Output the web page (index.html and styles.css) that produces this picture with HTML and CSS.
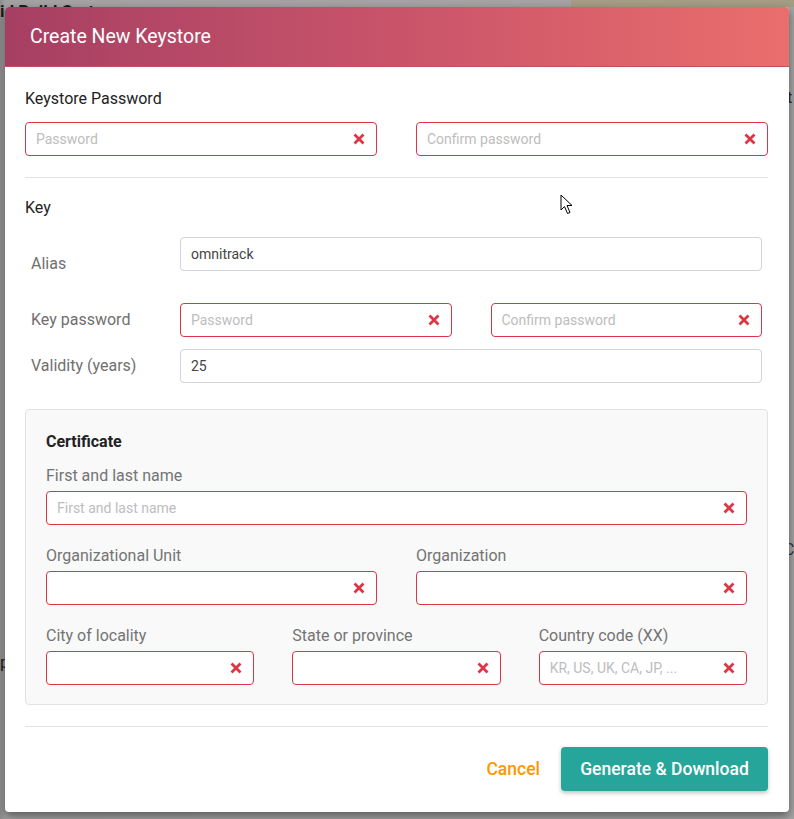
FILE: index.html
```html
<!DOCTYPE html>
<html>
<head>
<meta charset="utf-8">
<link rel="stylesheet" href="styles.css">
</head>
<body>
<div class="backdrop">
  <span class="bg-title">id Build Cert</span>
  <span class="bg-olive"></span>
  <span class="bg-frag bg-t">t</span>
  <span class="bg-frag bg-c">C</span>
  <span class="bg-frag bg-p">p</span>
</div>
<div class="dialog">
  <div class="dialog-header">Create New Keystore</div>
  <div class="dialog-body">
    <div class="section-title">Keystore Password</div>
    <div class="grid-2 top-row">
      <div class="field invalid"><span class="ph">Password</span><svg class="xicon" viewBox="0 0 12 12"><path d="M1.5 1.5L10.5 10.5M10.5 1.5L1.5 10.5"/></svg></div>
      <div class="field invalid"><span class="ph">Confirm password</span><svg class="xicon" viewBox="0 0 12 12"><path d="M1.5 1.5L10.5 10.5M10.5 1.5L1.5 10.5"/></svg></div>
    </div>
    <div class="divider d1"></div>
    <div class="section-title key-title">Key</div>
    <div class="key-rows">
      <div class="key-row alias-row">
        <div class="key-label alias-label">Alias</div>
        <div class="field"><span class="val">omnitrack</span></div>
      </div>
      <div class="key-row pw-row">
        <div class="key-label">Key password</div>
        <div class="grid-2 kp">
          <div class="field invalid"><span class="ph">Password</span><svg class="xicon" viewBox="0 0 12 12"><path d="M1.5 1.5L10.5 10.5M10.5 1.5L1.5 10.5"/></svg></div>
          <div class="field invalid"><span class="ph">Confirm password</span><svg class="xicon" viewBox="0 0 12 12"><path d="M1.5 1.5L10.5 10.5M10.5 1.5L1.5 10.5"/></svg></div>
        </div>
      </div>
      <div class="key-row val-row">
        <div class="key-label">Validity (years)</div>
        <div class="field"><span class="val">25</span></div>
      </div>
    </div>
    <div class="cert">
      <div class="cert-title">Certificate</div>
      <div class="cert-label first">First and last name</div>
      <div class="field invalid"><span class="ph">First and last name</span><svg class="xicon" viewBox="0 0 12 12"><path d="M1.5 1.5L10.5 10.5M10.5 1.5L1.5 10.5"/></svg></div>
      <div class="grid-2 cert-grid">
        <div>
          <div class="cert-label">Organizational Unit</div>
          <div class="field invalid"><span class="ph"></span><svg class="xicon" viewBox="0 0 12 12"><path d="M1.5 1.5L10.5 10.5M10.5 1.5L1.5 10.5"/></svg></div>
        </div>
        <div>
          <div class="cert-label">Organization</div>
          <div class="field invalid"><span class="ph"></span><svg class="xicon" viewBox="0 0 12 12"><path d="M1.5 1.5L10.5 10.5M10.5 1.5L1.5 10.5"/></svg></div>
        </div>
      </div>
      <div class="grid-3 cert-grid">
        <div>
          <div class="cert-label">City of locality</div>
          <div class="field invalid"><span class="ph"></span><svg class="xicon" viewBox="0 0 12 12"><path d="M1.5 1.5L10.5 10.5M10.5 1.5L1.5 10.5"/></svg></div>
        </div>
        <div>
          <div class="cert-label">State or province</div>
          <div class="field invalid"><span class="ph"></span><svg class="xicon" viewBox="0 0 12 12"><path d="M1.5 1.5L10.5 10.5M10.5 1.5L1.5 10.5"/></svg></div>
        </div>
        <div>
          <div class="cert-label">Country code (XX)</div>
          <div class="field invalid"><span class="ph">KR, US, UK, CA, JP, ...</span><svg class="xicon" viewBox="0 0 12 12"><path d="M1.5 1.5L10.5 10.5M10.5 1.5L1.5 10.5"/></svg></div>
        </div>
      </div>
    </div>
    <div class="divider d2"></div>
    <div class="actions">
      <span class="btn-cancel">Cancel</span>
      <span class="btn-primary">Generate &amp; Download</span>
    </div>
  </div>
</div>
<svg class="cursor" viewBox="0 0 14 22" width="14" height="22"><path d="M1 1L1 16L4.5 12.5L7.5 19.5L10 18.5L7 11.5L12 11.5Z" fill="#fff" stroke="#000" stroke-width="1"/></svg>
</body>
</html>
```

FILE: styles.css
```css
* { box-sizing: border-box; }
html, body { margin: 0; padding: 0; }
body {
  background: #9b9b9b;
  font-family: Roboto, "Liberation Sans", sans-serif;
  width: 794px;
  height: 819px;
  overflow: hidden;
  position: relative;
  padding: 7px 5px 0 5px;
}
.backdrop { position: absolute; inset: 0; background: linear-gradient(to right, #8c8c8c 0, #a2a2a2 6px, #a4a4a4 100%); }
.bg-title { position: absolute; left: 0; top: 1px; font-size: 17px; font-weight: 700; color: #1c1c1c; }
.bg-olive { position: absolute; left: 571px; top: 0; width: 223px; height: 7px; background: #a39d85; }
.bg-frag { position: absolute; font-size: 16px; color: #222; }
.bg-t { left: 787px; top: 88px; }
.bg-c { left: 784px; top: 540px; color: #333; }
.bg-p { left: 0; top: 652px; font-size: 17px; }

.dialog {
  position: relative;
  width: 784px;
  height: 805px;
  background: #fff;
  border-radius: 4px;
  box-shadow: 0 4px 10px rgba(0,0,0,0.45);
  overflow: hidden;
}
.dialog-header {
  height: 60px;
  background: linear-gradient(to right, #a63f63 0%, #c9546a 50%, #ea6e6c 100%);
  color: #fff;
  font-size: 19.5px;
  padding: 0 25px;
  display: flex;
  align-items: center;
  border-bottom: 1px solid #c0525a;
}
.dialog-body { padding: 22px 21px 0 20px; }
.section-title { font-size: 16px; line-height: 20px; color: #222; }
.top-row { margin-top: 13px; }
.grid-2 { display: grid; grid-template-columns: 1fr 1fr; column-gap: 39px; }
.grid-3 { display: grid; grid-template-columns: 1fr 1fr 1fr; column-gap: 38px; }

.field {
  height: 34px;
  border: 1px solid #ced4da;
  border-radius: 4px;
  background: #fff;
  display: flex;
  align-items: center;
  padding: 0 11px 0 10px;
  font-size: 14px;
}
.field.invalid { border-color: #dc3545; }
.ph { flex: 1; color: #bdbdbd; white-space: nowrap; overflow: hidden; }
.val { flex: 1; color: #444; }
.xicon { width: 12px; height: 12px; flex: none; }
.xicon path { stroke: #dc3545; stroke-width: 2.8; fill: none; }

.divider { height: 1px; background: #e4e4e4; }
.d1 { margin-top: 21px; }
.key-title { margin-top: 20px; }
.key-rows { padding: 0 6px; margin-top: 19px; }
.key-row { display: grid; grid-template-columns: 149px 1fr; align-items: center; }
.key-label { font-size: 16px; color: #6f6f6f; line-height: 20px; }
.alias-row { align-items: start; }
.alias-label { padding-top: 17px; }
.pw-row { margin-top: 29px; }
.val-row { margin-top: 12px; }

.cert {
  margin-top: 26px;
  background: #f9f9f9;
  border: 1px solid #e2e2e2;
  border-radius: 4px;
  padding: 22px 20px 19px 20px;
}
.cert-title { font-size: 16px; font-weight: 700; line-height: 20px; color: #222; }
.cert-label { font-size: 16px; color: #747474; line-height: 20px; margin-bottom: 5px; }
.cert-label.first { margin-top: 14px; }
.cert-grid { margin-top: 21px; }

.d2 { margin-top: 21px; }
.actions { display: flex; justify-content: flex-end; align-items: center; margin-top: 20px; gap: 21px; }
.btn-cancel { color: #ff9800; font-size: 17.5px; font-weight: 500; }
.btn-primary {
  height: 44px;
  width: 207px;
  background: #26a69a;
  color: #fff;
  font-size: 17.5px;
  font-weight: 500;
  border-radius: 4px;
  display: flex;
  align-items: center;
  justify-content: center;
  box-shadow: 0 2px 4px rgba(0,0,0,0.25);
}
.cursor { position: absolute; left: 560px; top: 194px; }
```
